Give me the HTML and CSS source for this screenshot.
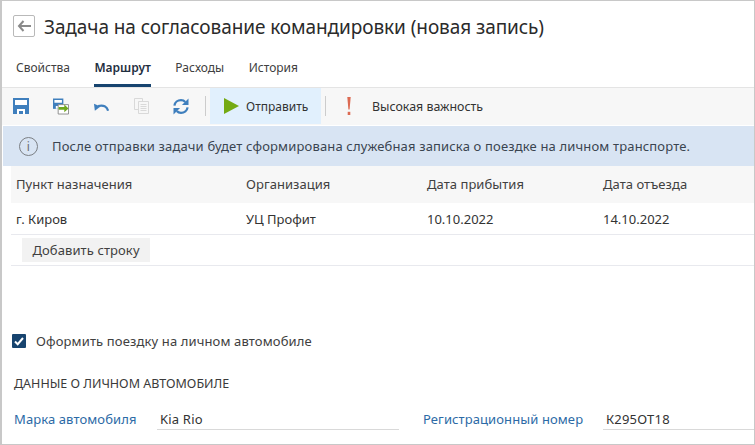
FILE: index.html
```html
<!DOCTYPE html>
<html lang="ru">
<head>
<meta charset="utf-8">
<title>Задача</title>
<link rel="stylesheet" href="styles.css">
</head>
<body>
<div class="window">
  <header class="head">
    <button class="back" aria-label="Назад">
      <svg width="14" height="12" viewBox="0 0 14 12"><path d="M6.500 1 2 6l4.500 5M2 6h12" fill="none" stroke="#8a8a8a" stroke-width="2"/></svg>
    </button>
    <h1 class="title">Задача на согласование командировки (новая запись)</h1>
  </header>
  <nav class="tabs">
    <a class="tab">Свойства</a>
    <a class="tab active">Маршрут</a>
    <a class="tab">Расходы</a>
    <a class="tab">История</a>
  </nav>
  <div class="toolbar">
    <span class="ico first">
      <svg width="16" height="16" viewBox="0 0 16 16"><path d="M0 0h16v16H0z" fill="#3f7fbd"/><path d="M2 2h12v5H2z" fill="#fff"/><path d="M4 11h8v5h-2v-3H6v3H4z" fill="#fff"/></svg>
    </span>
    <span class="ico">
      <svg width="17" height="17" viewBox="0 0 17 17"><path d="M0 0h11v11H0z" fill="#3f7fbd"/><path d="M1.500 1.500h8v3h-8zM3 8h5v3H3z" fill="#fff"/><path d="M5.500 6.500h11v10h-11z" fill="#fff" stroke="#8c8c8c"/><path d="M6 9h6V6.500l4.500 4-4.500 4V12H6z" fill="#6fa81e"/></svg>
    </span>
    <span class="ico">
      <svg width="17" height="17" viewBox="0 0 17 17"><path d="M16 13C15 8.500 11 6.500 5.500 8" fill="none" stroke="#3f7fbd" stroke-width="2.300"/><path d="M1 5.500l1 7.500 6-4.500z" fill="#3f7fbd"/></svg>
    </span>
    <span class="ico">
      <svg width="15" height="16" viewBox="0 0 15 16"><path d="M.5.500h8v11h-8z" fill="#f7f7f7" stroke="#d9d9d9"/><path d="M4.500 3.500h10v12h-10z" fill="#f7f7f7" stroke="#d9d9d9"/><path d="M6.500 6.500h6M6.500 8.500h6M6.500 10.500h6M6.500 12.500h6" stroke="#d9d9d9"/></svg>
    </span>
    <span class="ico">
      <svg width="17" height="17" viewBox="0 0 17 17"><path d="M1.500 7.500C2 4 5 1.700 8.500 1.700c2 0 3.500.8 4.500 2" fill="none" stroke="#3f7fbd" stroke-width="2.400"/><path d="M16.500 0v7h-7z" fill="#3f7fbd"/><path d="M15.500 9.500c-.5 3.500-3.500 5.800-7 5.800-2 0-3.500-.8-4.500-2" fill="none" stroke="#3f7fbd" stroke-width="2.400"/><path d="M.5 17v-7h7z" fill="#3f7fbd"/></svg>
    </span>
    <span class="sep"></span>
    <button class="send">
      <svg width="15" height="16" viewBox="0 0 15 16"><path d="M0 0l15 8-15 8z" fill="#74aa13"/></svg>
      <span>Отправить</span>
    </button>
    <span class="sep sep-right"></span>
    <span class="alert">
      <svg width="4" height="18" viewBox="0 0 4 18"><path d="M.3 0h3.400L2.600 12.500H1.400z" fill="#dc6a52"/><path d="M.7 14.800h2.600V18H.7z" fill="#dc6a52"/></svg>
    </span>
    <span class="tool-text">Высокая важность</span>
  </div>
  <div class="info">
    <span class="info-icon">i</span>
    <span>После отправки задачи будет сформирована служебная записка о поездке на личном транспорте.</span>
  </div>
  <section class="table">
    <div class="row header">
      <span>Пункт назначения</span><span>Организация</span><span>Дата прибытия</span><span>Дата отъезда</span>
    </div>
    <div class="row body">
      <span>г. Киров</span><span>УЦ Профит</span><span>10.10.2022</span><span>14.10.2022</span>
    </div>
    <div class="table-foot"><button class="add">Добавить строку</button></div>
  </section>
  <label class="check">
    <span class="box">
      <svg width="14" height="14" viewBox="0 0 14 14"><path d="M3 7.500l2.700 2.700L11 4" fill="none" stroke="#fff" stroke-width="2"/></svg>
    </span>
    <span>Оформить поездку на личном автомобиле</span>
  </label>
  <h2 class="section">ДАННЫЕ О ЛИЧНОМ АВТОМОБИЛЕ</h2>
  <div class="fields">
    <span class="label label-brand">Марка автомобиля</span>
    <span class="value value-brand">Kia Rio</span>
    <span class="label label-reg">Регистрационный номер</span>
    <span class="value value-reg">К295ОТ18</span>
  </div>
</div>
</body>
</html>
```
FILE: styles.css
```css
* { box-sizing: border-box; }
html, body { margin: 0; padding: 0; }
body { width: 755px; height: 445px; overflow: hidden; background: #fff; }
.window {
  width: 755px; height: 445px; overflow: hidden;
  border: 1px solid #c8c8c8; border-width: 1px 1px 1px 2px;
  font-family: "Noto Sans", sans-serif; font-size: 13px; color: #333;
  background: #fff;
}
button { font: inherit; color: inherit; }
.head { display: flex; align-items: center; height: 53px; padding: 0 0 3px 11px; }
.back {
  width: 22px; height: 22px; padding: 0; margin-right: 9px;
  display: flex; align-items: center; justify-content: center;
  background: #fff; border: 1px solid #b9b9b9; border-radius: 2px;
}
.title { margin: 1px 0 0; font-size: 19px; font-weight: 400; color: #2b2b2b; letter-spacing: -.08px; white-space: nowrap; }
.tabs { display: flex; height: 33px; padding-left: 14px; gap: 24.500px; font-size: 12px; }
.tab { height: 33px; line-height: 28px; color: #404040; }
.tab.active { font-weight: 600; color: #1f2f3f; border-bottom: 3px solid #17446f; }
.toolbar {
  display: flex; align-items: center; height: 38px; padding-bottom: 1px;
  background: #f7f7f7; border-top: 1px solid #e4e4e4; font-size: 12px;
}
.ico { display: flex; justify-content: center; width: 16px; margin-right: 24px; }
.ico.first { margin-left: 11px; }
.sep { width: 1px; height: 20px; background: #ccc; margin: 0 4px 0 -8px; flex: none; }
.sep-right { margin: 0 0 0 4px; }
.send {
  display: flex; align-items: center; height: 36px; width: 111px; padding: 0 0 0 14px; gap: 7px;
  background: #e1f0fd; border: 0;
}
.alert { display: flex; justify-content: center; width: 46px; }
.tool-text { font-size: 12.400px; color: #333; }
.info {
  display: flex; align-items: center; gap: 14px; height: 40px; margin: 1px 0 0 1px; padding-left: 16px;
  background: #d8e4f3; color: #3a4450; letter-spacing: .155px; white-space: nowrap;
}
.info-icon {
  width: 19px; height: 19px; border: 1.500px solid #7b7f84; border-radius: 50%;
  display: flex; align-items: center; justify-content: center; font-size: 12px; color: #6b6f74; flex: none;
}
.table { margin-left: 9px; }
.row { display: grid; grid-template-columns: 230px 181px 176px 1fr; padding-left: 5px; }
.row.header { height: 37px; line-height: 37px; background: #f7f7f7; color: #404040; letter-spacing: .05px; }
.row.body { height: 32px; line-height: 32px; border-bottom: 1px solid #e8e9ee; color: #333; }
.table-foot { height: 31px; padding: 3px 0 0 11px; border-bottom: 1px solid #e8e9ee; }
.add { height: 24px; width: 128px; padding: 0; background: #f2f2f2; border: 0; color: #404040; letter-spacing: .1px; }
.check { display: flex; align-items: center; gap: 10px; height: 20px; margin: 65px 0 0 10px; color: #404040; letter-spacing: .13px; }
.box { width: 14px; height: 14px; background: #17446f; border-radius: 1px; display: block; flex: none; }
.box svg { display: block; }
.section { margin: 23px 0 0 12px; font-size: 12.500px; font-weight: 400; height: 20px; line-height: 20px; color: #3a3a3a; }
.fields { display: flex; margin: 15px 0 0 12px; height: 21px; line-height: 20px; }
.label { color: #2c6aa6; letter-spacing: .1px; }
.label-brand { width: 143px; }
.label-reg { width: 181px; padding-left: 1px; }
.value { height: 21px; padding-left: 3px; border-bottom: 1px solid #d9d9d9; color: #333; letter-spacing: .2px; }
.value-brand { width: 242px; margin-right: 23px; }
.value-reg { width: 151px; }
```
